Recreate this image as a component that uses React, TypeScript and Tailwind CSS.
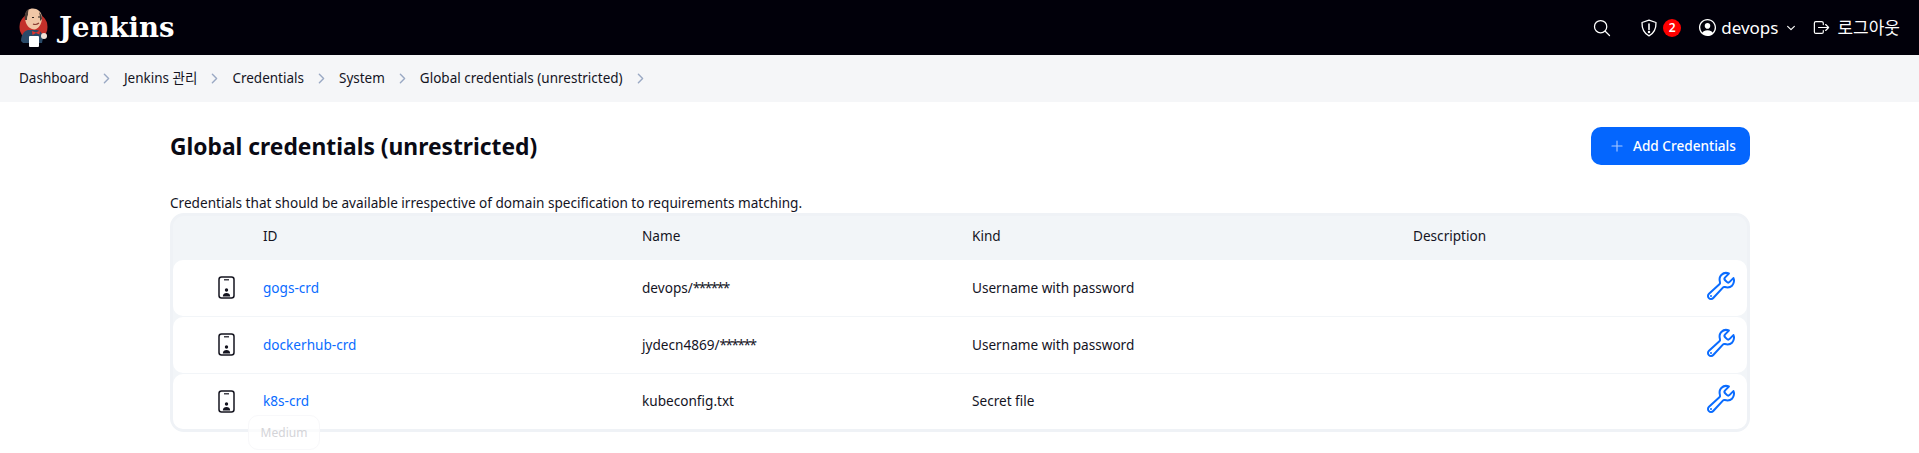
import { IoAddOutline, IoBuildOutline, IoChevronDownOutline, IoChevronForwardOutline, IoLogOutOutline, IoPersonCircleOutline, IoSearchOutline } from "react-icons/io5";

const crumbs = ["Dashboard", "Jenkins 관리", "Credentials", "System", "Global credentials (unrestricted)"];

const rows = [
  { id: "gogs-crd", name: "devops/", mask: "******", kind: "Username with password", height: "h-[56px]" },
  { id: "dockerhub-crd", name: "jydecn4869/", mask: "******", kind: "Username with password", height: "h-[56px]" },
  { id: "k8s-crd", name: "kubeconfig.txt", mask: "", kind: "Secret file", height: "h-[55px]" },
];

const JenkinsLogo = () => (
  <svg viewBox="0 0 29 39" className="h-[39px] w-[29px]">
    <circle cx="14.5" cy="19" r="14" fill="#c4302a" />
    <path d="M2 33c0-6 3-10 7-11l9 0c4 1 6 4 6 8l-1 5H4z" fill="#2a4a68" />
    <path d="M6 9C6 3 10 .5 14 .5s9 3 9 9c0 5-2 9-5 11-2 1.500-5 1-7-.5-3-2-5-6-5-11z" fill="#f0c6a6" />
    <path d="M6 12C5 6 7 2 10 1c-1 2-1 4-1 6-1 1-1 3-1 5z" fill="#4a3a34" />
    <path d="M20 4c2 2 3 4 3 7l-2 2c0-3 0-6-1-9z" fill="#4a3a34" />
    <path d="M13 9.500h2M19 9h2" stroke="#2a201c" strokeWidth="1" />
    <path d="M14 16c2 1 4 .5 6-1" stroke="#8a3a30" strokeWidth="1.200" fill="none" />
    <path d="M13 23l4 1.500 4-2-.5 4-3.500-1.500-3.500 2z" fill="#e0322c" />
    <rect x="10" y="28" width="10" height="11" rx="1" fill="#ffffff" />
    <circle cx="25" cy="28" r="3" fill="#efe2d6" />
  </svg>
);

const ShieldIcon = () => (
  <svg viewBox="0 0 20 20" fill="none" stroke="#ffffff" strokeWidth="1.3" strokeLinejoin="round" className="h-[20px] w-[20px]">
    <path d="M10 2.200l7 2.300c.2 6.600-2 10.800-7 13.300-5-2.500-7.200-6.700-7-13.300z" />
    <path d="M10 6v5.500" strokeLinecap="round" strokeWidth="1.600" />
    <circle cx="10" cy="14" r=".6" fill="#ffffff" />
  </svg>
);

const CredentialIcon = () => (
  <svg viewBox="0 0 18 24" fill="none" className="h-[24px] w-[18px]">
    <rect x="1" y="1" width="15" height="21" rx="2.500" stroke="#14141f" strokeWidth="1.500" />
    <path d="M6 3.800h5" stroke="#14141f" strokeWidth="1.200" />
    <circle cx="8.500" cy="14" r="1.700" fill="#14141f" />
    <path d="M4.800 20.500c.3-2.400 1.600-3.400 3.700-3.400s3.400 1 3.700 3.400z" fill="#14141f" />
  </svg>
);

const App = () => {
  return (
    <div className="relative h-[453px] overflow-hidden bg-white font-['Noto_Sans','Noto_Sans_CJK_KR',sans-serif] text-[13.6px] text-[#14141f]">
      <header className="flex h-[55px] items-center justify-between bg-[#01000a] pl-[19px] pr-[19px] text-white">
        <div className="flex items-center gap-[11px]">
          <JenkinsLogo />
          <span className="font-['DejaVu_Serif',serif] text-[27.5px] font-bold leading-none">Jenkins</span>
        </div>
        <div className="flex items-center">
          <IoSearchOutline className="mr-[27px] text-[20px]" />
          <ShieldIcon />
          <span className="ml-[4px] flex h-[18px] w-[18px] items-center justify-center rounded-full bg-[#fe0000] text-[12px] font-semibold">2</span>
          <IoPersonCircleOutline className="ml-[16px] text-[21px]" />
          <span className="ml-[3px] text-[17px]">devops</span>
          <IoChevronDownOutline className="ml-[7px] text-[12px]" />
          <IoLogOutOutline className="ml-[15px] text-[19px]" />
          <span className="ml-[6px] text-[17px]">로그아웃</span>
        </div>
      </header>

      <nav className="flex h-[47px] items-center bg-[#f5f6f8] pl-[19px] text-[13.5px]">
        {crumbs.map((crumb) => (
          <div key={crumb} className="flex items-center">
            <span>{crumb}</span>
            <IoChevronForwardOutline className="mx-[10px] text-[15px] text-[#9aa9c4]" />
          </div>
        ))}
      </nav>

      <main className="mx-[170px] w-[1580px]">
        <div className="flex h-[63px] items-end justify-between">
          <h1 className="pb-[1px] text-[22.8px] font-bold leading-[34px] text-[#0a0a14]">Global credentials (unrestricted)</h1>
          <button className="flex h-[38px] w-[159px] items-center rounded-[10px] bg-[#0466fe] pl-[17px] text-[13.6px] font-medium text-white">
            <IoAddOutline className="mr-[7px] text-[18px] text-[#a9c9ff]" />
            Add Credentials
          </button>
        </div>
        <p className="mt-[28px] h-[20px] leading-[20px]">Credentials that should be available irrespective of domain specification to requirements matching.</p>

        <div className="rounded-[14px] border-[3px] border-[#eff2f6] bg-[#f2f5f8]">
          <div className="flex h-[44px] items-center pb-[3px]">
            <div className="w-[90px]" />
            <div className="w-[379px]">ID</div>
            <div className="w-[330px]">Name</div>
            <div className="w-[441px]">Kind</div>
            <div>Description</div>
          </div>
          <div className="flex flex-col gap-[1px]">
            {rows.map((row) => (
              <div key={row.id} className={`flex items-center rounded-[10px] bg-white ${row.height}`}>
                <div className="flex w-[90px] justify-center pl-[17px]">
                  <CredentialIcon />
                </div>
                <div className="w-[379px] text-[#0a6cff]">{row.id}</div>
                <div className="w-[330px]">
                  {row.name}
                  <span className="tracking-[-1.5px]">{row.mask}</span>
                </div>
                <div className="w-[441px]">{row.kind}</div>
                <div className="flex-1" />
                <IoBuildOutline className="mb-[5px] mr-[10px] text-[32px] text-[#0a6cff]" />
              </div>
            ))}
          </div>
        </div>
      </main>

      <div className="absolute left-[248px] top-[415px] flex h-[35px] w-[72px] items-center justify-center rounded-[10px] border border-[#f8f8fa] bg-white/70 text-[12px] text-[#d4d4d8]">
        Medium
      </div>
    </div>
  );
};

export default App;
